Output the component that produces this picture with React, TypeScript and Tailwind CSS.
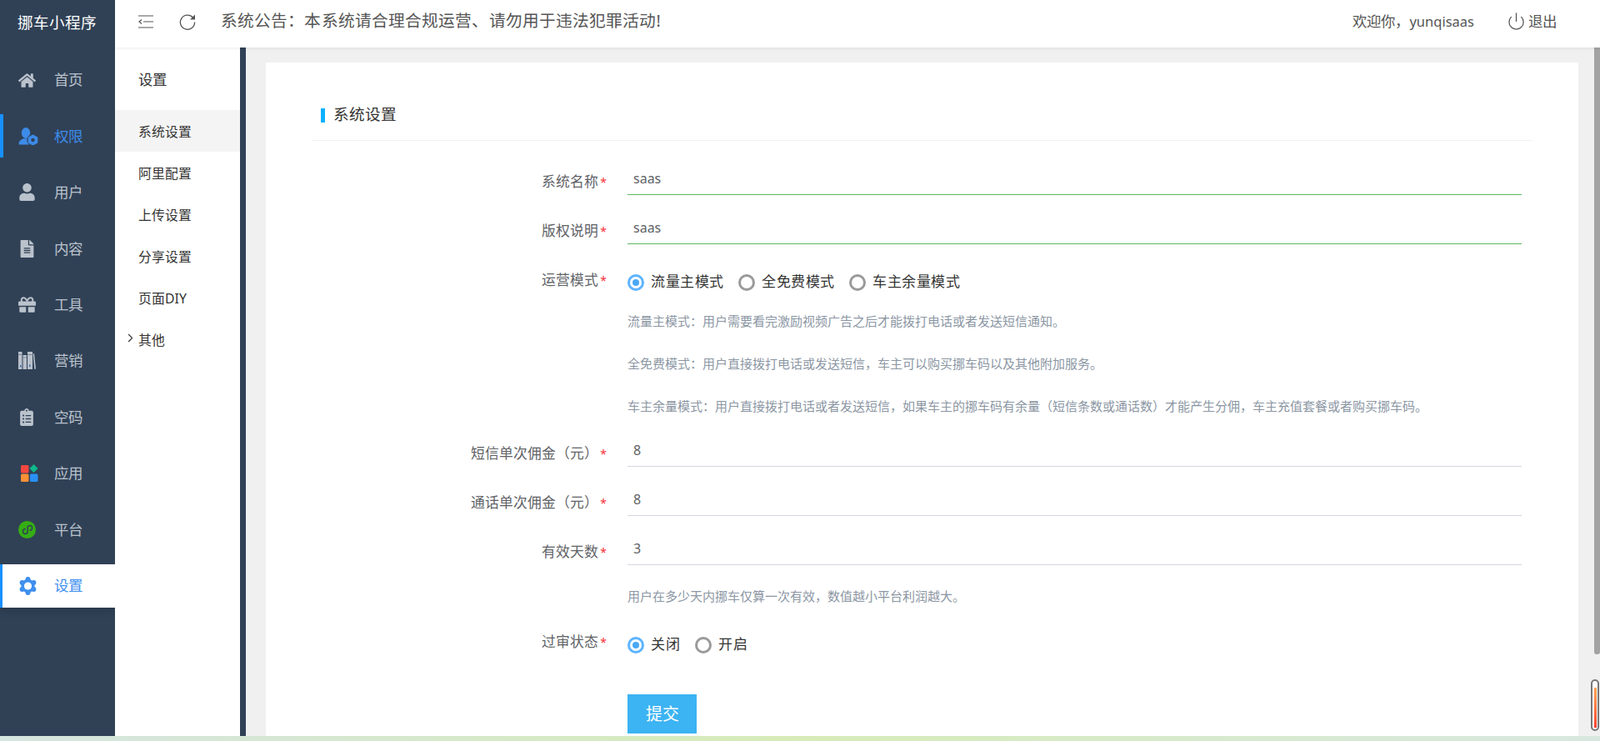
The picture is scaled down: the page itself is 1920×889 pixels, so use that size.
import { FaHome, FaUser, FaFileAlt, FaGift, FaClipboardList } from "react-icons/fa";
import { ChevronRight, Power } from "lucide-react";

const COLON = "\uFF1A";
const COMMA = "\uFF0C";
const LP = "\uFF08";
const RP = "\uFF09";
const STOP = "\u3002";

const Books = () => (
  <svg viewBox="0 0 21 21" className="w-[21px] h-[21px]" fill="#b9c0ca">
    <path d="M0 0h4.5v21H0zM5.5 4h4.5v17H5.5zM11 0h6v21h-6z" />
    <path d="M17.6 2.5l1.4-.4 2 18.5-1.6.4z" />
    <path d="M2 16h1.5v2.5H2zM13 15.5h1.5v2.5H13z" fill="#3a6ea8" />
    <path d="M0 3h4.5v1H0zM11 3h6v1h-6zM5.5 6.5h4.5v1H5.5z" fill="#7b8797" />
  </svg>
);

const Apps = () => (
  <svg viewBox="0 0 21 21" className="w-[21px] h-[21px] ml-[3px]">
    <rect x="0" y="1" width="9.5" height="9.5" rx="1.5" fill="#f5483f" />
    <rect x="0" y="11.5" width="9.5" height="9.5" rx="1.5" fill="#fb9136" />
    <rect x="11" y="11.5" width="9.5" height="9.5" rx="1.5" fill="#2a90f5" />
    <path d="M15.5 0l5 5-5 5-5-5z" fill="#0fb88a" />
  </svg>
);

const Mini = () => (
  <svg viewBox="0 0 21 21" className="w-[21px] h-[21px]">
    <circle cx="10.5" cy="10.5" r="10.5" fill="#35ae14" />
    <path
      d="M8 9.6c-1.3.3-2.4 1.4-2.4 2.9 0 1.8 1.3 3 2.8 3s2.7-1.2 2.7-2.8V8.4c0-1.6 1.2-2.9 2.7-2.9s2.8 1.3 2.8 3c0 1.5-1.2 2.6-2.5 2.8"
      fill="none"
      stroke="#304156"
      strokeWidth="1.5"
      strokeLinecap="round"
    />
  </svg>
);

const UserGear = () => (
  <svg viewBox="0 0 24 21" className="w-[24px] h-[21px]" fill="#3d8be8">
    <ellipse cx="9" cy="6.5" rx="5.2" ry="6.5" />
    <path d="M0.5 19.5c0-3.2 2.6-5 5.5-6.2h6c2 .8 3.5 2 4 3.5v3.7H2c-.9 0-1.5-.1-1.5-1z" />
    <g stroke="#304156" strokeWidth="1.2">
      <circle cx="17.5" cy="15" r="6.6" />
    </g>
    <g>
      <circle cx="17.5" cy="9.9" r="1.5" />
      <circle cx="17.5" cy="20.1" r="1.5" />
      <circle cx="13.1" cy="12.4" r="1.5" />
      <circle cx="21.9" cy="12.4" r="1.5" />
      <circle cx="13.1" cy="17.6" r="1.5" />
      <circle cx="21.9" cy="17.6" r="1.5" />
      <circle cx="17.5" cy="15" r="5" />
    </g>
    <circle cx="17.5" cy="15" r="2.2" fill="#304156" />
  </svg>
);

const GearHex = () => (
  <svg viewBox="0 0 23 22" className="w-[23px] h-[22px]" fill="#3f8fee">
    <circle cx="11.5" cy="11" r="8.2" />
    <circle cx="11.5" cy="3" r="3" />
    <circle cx="11.5" cy="19" r="3" />
    <circle cx="4.6" cy="7" r="3" />
    <circle cx="18.4" cy="7" r="3" />
    <circle cx="4.6" cy="15" r="3" />
    <circle cx="18.4" cy="15" r="3" />
    <circle cx="11.5" cy="11" r="4.6" fill="#fff" />
  </svg>
);

const MenuFold = () => (
  <svg viewBox="0 0 18 16" className="w-[18px] h-[16px]" fill="none" stroke="#555" strokeWidth="1.2">
    <path d="M0 1h18M6 8h12M0 15h18" />
    <path d="M4 5.5L1 8l3 2.5" />
  </svg>
);

const Refresh = () => (
  <svg viewBox="0 0 20 20" className="w-[20px] h-[20px]" fill="none">
    <path d="M16.6 5.2A8.6 8.6 0 1 0 18.6 10.5" stroke="#555" strokeWidth="1.3" />
    <path d="M19 1.5v6h-6z" fill="#555" />
  </svg>
);

const nav = [
  { label: "首页", icon: <FaHome className="w-[21px] h-[21px]" /> },
  { label: "权限", icon: <UserGear />, on: true },
  { label: "用户", icon: <FaUser className="w-[21px] h-[21px]" /> },
  { label: "内容", icon: <FaFileAlt className="w-[19px] h-[21px] ml-px" /> },
  { label: "工具", icon: <FaGift className="w-[21px] h-[21px]" /> },
  { label: "营销", icon: <Books /> },
  { label: "空码", icon: <FaClipboardList className="w-[20px] h-[21px]" /> },
  { label: "应用", icon: <Apps /> },
  { label: "平台", icon: <Mini /> },
];

const subNav = ["阿里配置", "上传设置", "分享设置", "页面DIY"];

function Label({ text, className = "" }: { text: string; className?: string }) {
  return (
    <div className={`w-[378px] shrink-0 pr-[25px] text-right text-[16.8px] leading-[24px] text-[#606266] ${className}`}>
      {text}
      <span className="ml-[2px] text-[14px] text-[#f5323c]">*</span>
    </div>
  );
}

function Field({ label, value, tone }: { label: string; value: string; tone: string }) {
  return (
    <div className="flex h-[44px]">
      <Label text={label} className="pt-[16px]" />
      <div className={`flex-1 border-b pl-[7px] text-[16px] leading-[24px] pt-[12px] text-[#606266] font-['Open_Sans',sans-serif] ${tone}`}>{value}</div>
    </div>
  );
}

function Radio({ text, on }: { text: string; on?: boolean }) {
  return (
    <div className="flex items-center gap-[8px] text-[17px] tracking-[0.5px] text-[#333]">
      {on ? (
        <span className="w-[20px] h-[20px] rounded-full border-[3px] border-[#5eb4ff] flex items-center justify-center">
          <span className="w-[8px] h-[8px] rounded-full bg-[#4aa8f5]" />
        </span>
      ) : (
        <span className="w-[20px] h-[20px] rounded-full border-[3px] border-[#9a9a9a]" />
      )}
      <span className="pb-[3px]">{text}</span>
    </div>
  );
}

export default function App() {
  return (
    <div lang="zh-CN" className="relative h-[889px] w-[1920px] overflow-hidden flex flex-col font-['Noto_Sans_CJK_SC','Open_Sans',sans-serif] bg-[#f0f0f0]">
      <div className="flex flex-1 min-h-0">
        <aside className="w-[138px] shrink-0 bg-[#304156]">
          <div className="h-[57px] flex items-center pl-[21px] pb-[4px] text-[18.6px] text-white font-medium">挪车小程序</div>
          <div className="mt-[13px] flex flex-col gap-[15.4px]">
            {nav.map((n) => (
              <div
                key={n.label}
                className={`h-[52px] flex items-center border-l-[4px] pl-[18px] ${n.on ? "border-[#1890ff] text-[#3d8be8]" : "border-transparent text-[#bac2cc]"}`}
              >
                <span className="w-[43px] flex">{n.icon}</span>
                <span className="text-[17.5px] pb-[1px]">{n.label}</span>
              </div>
            ))}
            <div className="h-[52px] flex items-center border-l-[3px] border-[#1890ff] bg-white pl-[19px] text-[#3f8fee] shadow-[0_6px_8px_rgba(0,0,0,0.1)]">
              <span className="w-[43px] flex"><GearHex /></span>
              <span className="text-[17.5px]">设置</span>
            </div>
          </div>
        </aside>

        <div className="flex-1 min-w-0 flex flex-col">
          <header className="relative z-10 h-[57px] shrink-0 bg-white flex items-center pl-[28px] pr-[52px] pb-[6px] shadow-[0_1px_4px_rgba(0,0,0,0.08)] text-[#555]">
            <MenuFold />
            <span className="ml-[31px]"><Refresh /></span>
            <span className="ml-[30px] text-[19.7px] tracking-[0.1px] pb-[1px]">{`系统公告${COLON}本系统请合理合规运营、请勿用于违法犯罪活动!`}</span>
            <span className="ml-auto text-[17.4px] pb-[1px]">
              {`欢迎你${COMMA}`}<span className="text-[16.5px] font-['Open_Sans',sans-serif]">yunqisaas</span>
            </span>
            <Power className="ml-[39px] w-[23px] h-[23px]" strokeWidth={1.3} />
            <span className="ml-[3px] text-[17.5px] pb-[1px]">退出</span>
          </header>

          <div className="flex-1 min-h-0 flex">
            <nav className="w-[150px] shrink-0 bg-white text-[#333]">
              <div className="h-[75px] flex items-center pl-[28px] pt-[1px] text-[17.4px]">设置</div>
              <div className="h-[50px] flex items-center bg-[#f4f4f4] pl-[28px] pt-[3px] text-[15.8px]">系统设置</div>
              {subNav.map((s) => (
                <div key={s} className="h-[50px] flex items-center pl-[28px] pt-[3px] text-[15.8px]">{s}</div>
              ))}
              <div className="h-[50px] flex items-center pl-[10px] pt-[3px] text-[15.8px]">
                <ChevronRight className="w-[17px] h-[17px] mr-[1px] -mt-[6px]" strokeWidth={1.5} />
                其他
              </div>
            </nav>
            <div className="w-[7px] shrink-0 bg-[#304156]" />
            <main className="flex-1 min-w-0 pl-[24px] pr-[19px] pt-[18px] overflow-hidden">
              <div className="h-full bg-white">
                <div className="pt-[45px] ml-[56px] mr-[55px]">
                  <div className="flex items-center h-[49px] border-b border-[#f0f0f0] pb-[12px] pl-[10px]">
                    <span className="w-[5px] h-[17px] bg-[#0ab0ff]" />
                    <span className="ml-[10px] pb-[2px] text-[18.6px] text-[#333]">系统设置</span>
                  </div>
                </div>
                <div className="pl-[56px] pr-[68px] pt-[21px]">
                  <div className="flex flex-col gap-[15px]">
                    <Field label="系统名称" value="saas" tone="border-[#5cb85c]" />
                    <Field label="版权说明" value="saas" tone="border-[#5cb85c]" />
                  </div>
                  <div className="flex mt-[31px] h-[30px]">
                    <Label text="运营模式" />
                    <div className="flex items-center gap-[17.5px]">
                      <Radio text="流量主模式" on />
                      <Radio text="全免费模式" />
                      <Radio text="车主余量模式" />
                    </div>
                  </div>
                  <div className="ml-[378px] mt-[6px] text-[15px] leading-[51px] text-[#8b96a3]">
                    <p>{`流量主模式${COLON}用户需要看完激励视频广告之后才能拨打电话或者发送短信通知${STOP}`}</p>
                    <p>{`全免费模式${COLON}用户直接拨打电话或发送短信${COMMA}车主可以购买挪车码以及其他附加服务${STOP}`}</p>
                    <p>{`车主余量模式${COLON}用户直接拨打电话或者发送短信${COMMA}如果车主的挪车码有余量${LP}短信条数或通话数${RP}才能产生分佣${COMMA}车主充值套餐或者购买挪车码${STOP}`}</p>
                  </div>
                  <div className="flex flex-col gap-[15px] mt-[3px]">
                    <Field label={`短信单次佣金${LP}元${RP}`} value="8" tone="border-[#d5d5e2]" />
                    <Field label={`通话单次佣金${LP}元${RP}`} value="8" tone="border-[#d5d5e2]" />
                    <Field label="有效天数" value="3" tone="border-[#d5d5e2]" />
                  </div>
                  <div className="ml-[378px] mt-[22px] text-[15px] leading-[30px] text-[#8b96a3]">
                    {`用户在多少天内挪车仅算一次有效${COMMA}数值越小平台利润越大${STOP}`}
                  </div>
                  <div className="flex mt-[29px] h-[30px]">
                    <Label text="过审状态" className="-mt-[1px]" />
                    <div className="flex items-center gap-[18px]">
                      <Radio text="关闭" on />
                      <Radio text="开启" />
                    </div>
                  </div>
                  <button className="block ml-[378px] mt-[44px] w-[83px] h-[47px] bg-[#3cb3f2] text-white text-[20px]">提交</button>
                </div>
              </div>
            </main>
            <div className="w-[7px] shrink-0" />
          </div>
        </div>
      </div>
      <div className="h-[6px] shrink-0 bg-linear-to-r from-[#d5e5e0] via-[#d6ebb8] to-[#d8e8e0]" />
      {/* window scrollbar thumb and the floating heat gauge lie over the page */}
      <div className="absolute right-0 top-0 w-[7px] h-[785px] rounded-b-[3px] bg-[#a3a3a3]" />
      <div className="absolute right-[1px] top-[815px] w-[10px] h-[62px] rounded-full border-2 border-[#777] bg-white px-[1.5px] pb-[2px] pt-[8px]">
        <div className="h-full w-full bg-linear-to-b from-[#ffa552] to-[#ff3b30]" />
      </div>
    </div>
  );
}
